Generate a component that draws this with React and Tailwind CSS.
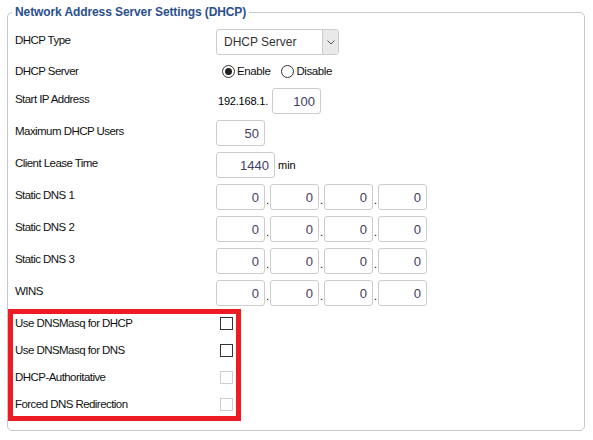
import { useState } from "react";

const FONT = "font-['Liberation_Sans',Arial,sans-serif]";

function Label({ children, flat }) {
  return (
    <div
      className={`w-[201px] shrink-0 text-[11.5px] tracking-[-0.55px] text-[#111] ${flat ? "pt-[1px]" : "pb-[3px]"}`}
    >
      {children}
    </div>
  );
}

function Row({ label, children, className = "", flat }) {
  return (
    <div className={`flex items-center ${className}`}>
      <Label flat={flat}>{label}</Label>
      <div className="flex items-center">{children}</div>
    </div>
  );
}

function Box({ value, wide }) {
  return (
    <input
      type="text"
      defaultValue={value}
      className={`${wide ? "w-[59px]" : "w-[49px]"} h-[26px] rounded-[3px] border border-[#cccccc] bg-white pr-[5px] text-right text-[13px] text-[#404062] outline-none`}
    />
  );
}

function IpBoxes({ values }) {
  return (
    <div className="flex items-center">
      {values.map((v, i) => (
        <div key={i} className="flex items-center">
          {i > 0 && <span className="w-[5px] self-end pb-[4px] text-center text-[11px] leading-none">.</span>}
          <Box value={v} />
        </div>
      ))}
    </div>
  );
}

function Radio({ checked, label, onClick }) {
  return (
    <button onClick={onClick} className="flex items-center gap-[2px] text-[11.5px] tracking-[-0.4px] text-[#111]">
      <span className="flex h-[13px] w-[13px] items-center justify-center rounded-full border border-[#333] bg-white">
        {checked && <span className="h-[7px] w-[7px] rounded-full bg-[#222]" />}
      </span>
      <span className="pt-[2px]">{label}</span>
    </button>
  );
}

function Check({ disabled }) {
  return (
    <span
      className={`ml-[4px] block h-[13px] w-[13px] border bg-white ${disabled ? "border-[#cfcfcf]" : "border-[#333]"}`}
    />
  );
}

export default function App() {
  const [enabled, setEnabled] = useState(true);

  return (
    <div className={`h-[440px] w-[593px] bg-white ${FONT}`}>
      <fieldset className="ml-[7px] mt-[5px] w-[578px] rounded-[5px] border border-[#c8c8c8]">
        <legend className="ml-[4px] px-[3px] text-[12px] font-bold leading-[15px] tracking-[-0.1px] text-[#2a4f8e]">
          Network Address Server Settings (DHCP)
        </legend>

        <div className="pb-[12px] pt-[9px]">
          <div className="pl-[7px]">
            <Row label="DHCP Type">
              <div className="flex h-[26px] w-[123px] items-center rounded-[3px] border border-[#cccccc] bg-white">
                <span className="flex-1 pl-[7px] text-[12px] text-[#333]">DHCP Server</span>
                <span className="flex h-full w-[16px] items-center justify-center rounded-r-[2px] border-l border-[#cccccc] bg-[#e9e9e9]">
                  <svg width="8" height="5" viewBox="0 0 8 5">
                    <path d="M0.5 0.5 L4 4 L7.5 0.5" fill="none" stroke="#555" strokeWidth="1" />
                  </svg>
                </span>
              </div>
            </Row>

            <Row label="DHCP Server" className="mt-[8px] h-[16px]" flat>
              <div className="ml-[6px] flex items-center gap-[11px]">
                <Radio checked={enabled} label="Enable" onClick={() => setEnabled(true)} />
                <Radio checked={!enabled} label="Disable" onClick={() => setEnabled(false)} />
              </div>
            </Row>

            <Row label="Start IP Address" className="mt-[9px]">
              <span className="mr-[4px] pl-[2px] text-[11px] tracking-[-0.2px]">192.168.1.</span>
              <Box value="100" />
            </Row>

            <Row label="Maximum DHCP Users" className="mt-[6px]">
              <Box value="50" />
            </Row>

            <Row label="Client Lease Time" className="mt-[6px]">
              <Box value="1440" wide />
              <span className="ml-[3px] text-[11px]">min</span>
            </Row>

            <Row label="Static DNS 1" className="mt-[6px]">
              <IpBoxes values={["0", "0", "0", "0"]} />
            </Row>
            <Row label="Static DNS 2" className="mt-[6px]">
              <IpBoxes values={["0", "0", "0", "0"]} />
            </Row>
            <Row label="Static DNS 3" className="mt-[6px]">
              <IpBoxes values={["0", "0", "0", "0"]} />
            </Row>
            <Row label="WINS" className="mt-[6px]">
              <IpBoxes values={["0", "0", "0", "0"]} />
            </Row>
          </div>

          {/* highlighted options */}
          <div className="relative mt-[4px] pl-[7px]">
            <Row label="Use DNSMasq for DHCP" className="h-[27px]" flat>
              <Check />
            </Row>
            <Row label="Use DNSMasq for DNS" className="h-[27px]" flat>
              <Check />
            </Row>
            <Row label="DHCP-Authoritative" className="h-[27px]" flat>
              <Check disabled />
            </Row>
            <Row label="Forced DNS Redirection" className="h-[27px]" flat>
              <Check disabled />
            </Row>
            <div className="pointer-events-none absolute left-0 top-[-1px] h-[112px] w-[233px] border-[5px] border-[#ed1c24]" />
          </div>
        </div>
      </fieldset>
    </div>
  );
}
